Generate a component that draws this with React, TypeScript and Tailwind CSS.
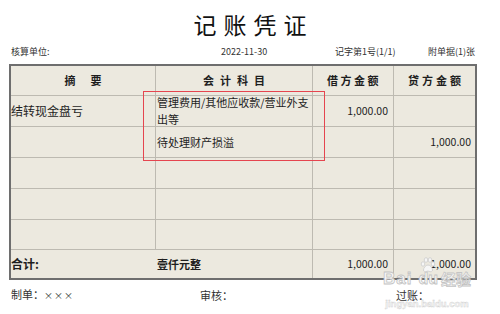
const cjk = "font-['Noto_Sans_CJK_SC','Noto_Sans',sans-serif]";

const cell = 'border-r border-b border-[#bdbab1] flex items-center';

const EMPTY_ROWS = [31, 31, 30];

function Paw() {
  return (
    <svg width="16" height="16" viewBox="0 0 16 16" fill="#f6f6f6" stroke="#cbcbcb" strokeWidth="0.8">
      <ellipse cx="3" cy="7" rx="1.8" ry="2.2" />
      <ellipse cx="6" cy="3" rx="1.8" ry="2.3" />
      <ellipse cx="10" cy="3" rx="1.8" ry="2.3" />
      <ellipse cx="13" cy="7" rx="1.8" ry="2.2" />
      <path d="M8 8c-2.5 0-4.5 3-4.5 5 0 1.6 1.5 2 2.5 1.6.8-.3 1.3-.5 2-.5s1.2.2 2 .5c1 .4 2.5 0 2.5-1.6 0-2-2-5-4.5-5z" />
    </svg>
  );
}

export default function App() {
  return (
    <div className={`relative w-[500px] h-[314px] bg-white text-[#1e1e1e] overflow-hidden ${cjk}`}>
      {/* title */}
      <div className="pt-[10px] h-[38px] text-center">
        <h1 className="text-[23px] leading-[28px] tracking-[7px] pl-[7px] font-normal text-[#111]">记账凭证</h1>
      </div>

      {/* voucher info */}
      <div className="mt-[8px] h-[12px] flex items-center pl-[11px] pr-[25px] text-[9px] leading-[12px] text-[#333]">
        <span className="w-[210px]">核算单位:</span>
        <span className="w-[114px]">2022-11-30</span>
        <span>记字第1号(1/1)</span>
        <span className="ml-auto">附单据(1)张</span>
      </div>

      {/* voucher table */}
      <div className="mt-[6px] ml-[9px] w-[468px] border-2 border-[#6e6e6e] bg-[#ece9df]">
        <div className="grid grid-cols-[145px_157px_81px_81px]">
          {/* header */}
          <div className={`${cell} h-[30px] justify-center text-[11px] font-bold tracking-[15px] pl-[15px]`}>摘要</div>
          <div className={`${cell} h-[30px] justify-center text-[11px] font-bold tracking-[6px] pl-[6px]`}>会计科目</div>
          <div className={`${cell} h-[30px] justify-center text-[11px] font-bold tracking-[2.5px] pl-[2px]`}>借方金额</div>
          <div className="border-b border-[#bdbab1] h-[30px] flex items-center justify-center text-[11px] font-bold tracking-[3px] pl-[3px]">贷方金额</div>

          {/* row 1 */}
          <div className={`${cell} h-[31px] text-[12px]`}>结转现金盘亏</div>
          <div className="border-r border-b border-[#bdbab1] h-[31px] pl-[1px] text-[11px]">
            <div className="-mt-[2px] leading-[17px]">
              管理费用/其他应收款/营业外支
              <br />
              出等
            </div>
          </div>
          <div className={`${cell} h-[31px] justify-end pr-[5px] text-[10.5px]`}>1,000.00</div>
          <div className="border-b border-[#bdbab1] h-[31px]" />

          {/* row 2 */}
          <div className={`${cell} h-[31px]`} />
          <div className={`${cell} h-[31px] pl-[1px] text-[11px]`}>待处理财产损溢</div>
          <div className={`${cell} h-[31px]`} />
          <div className="border-b border-[#bdbab1] h-[31px] flex items-center justify-end pr-[4px] text-[10.5px]">1,000.00</div>

          {EMPTY_ROWS.map((h, i) => (
            <div key={i} className="contents">
              <div className={cell} style={{ height: h }} />
              <div className={cell} style={{ height: h }} />
              <div className={cell} style={{ height: h }} />
              <div className="border-b border-[#bdbab1]" style={{ height: h }} />
            </div>
          ))}

          {/* total */}
          <div className="h-[28px] flex items-center text-[12px] font-bold">合计:</div>
          <div className="h-[28px] border-r border-[#bdbab1] flex items-center pl-[1px] text-[11px] font-bold">壹仟元整</div>
          <div className="h-[28px] border-r border-[#bdbab1] flex items-center justify-end pr-[5px] text-[10.5px]">1,000.00</div>
          <div className="h-[28px] flex items-center justify-end pr-[4px] text-[10.5px]">1,000.00</div>
        </div>
      </div>

      {/* signatures */}
      <div className="mt-[8px] h-[14px] flex items-center pl-[11px] text-[11px] leading-[14px] text-[#333]">
        <span className="w-[189px]">制单：<span className="text-[9px] tracking-[1px]">×××</span></span>
        <span className="w-[196px]">审核：</span>
        <span>过账：</span>
      </div>

      {/* highlight box */}
      <div className="absolute left-[143px] top-[91px] w-[182px] h-[70px] border-[1.5px] border-[#e5454f]" />

      {/* watermark */}
      <div className="absolute left-[382px] top-[257px] w-[90px] flex flex-col items-center text-[#f7f7f7] pointer-events-none">
        <div className="flex items-end h-[30px] font-['Liberation_Sans',sans-serif] font-bold leading-[16px] [-webkit-text-stroke:0.8px_#c4c4c4]">
          <span className="text-[17px] tracking-[1px]">Bai</span>
          <span className="relative ml-[6px] text-[16px]">
            <span className="absolute -top-[14px] left-[2px]">
              <Paw />
            </span>
            du
          </span>
          <span className={`ml-[3px] text-[15px] ${cjk}`}>经验</span>
        </div>
        <div className="mt-[11px] font-['Liberation_Sans',sans-serif] font-bold text-[9.5px] leading-[11px] [-webkit-text-stroke:0.4px_#d0d0d0]">
          jingyan.baidu.com
        </div>
      </div>
    </div>
  );
}
